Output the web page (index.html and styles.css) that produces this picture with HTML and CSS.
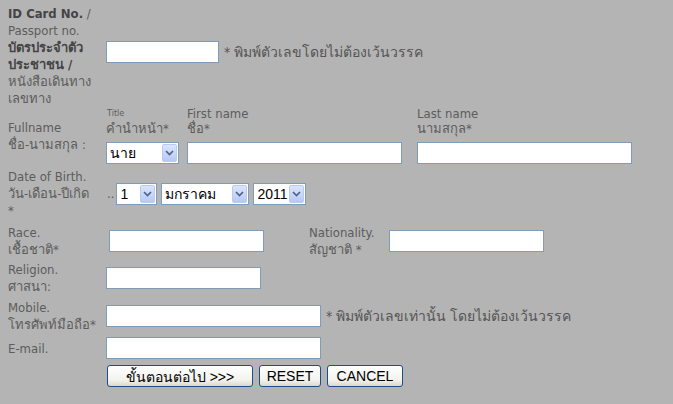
FILE: index.html
```html
<!DOCTYPE html>
<html lang="th">
<head>
    <meta charset="UTF-8">
    <title>Register</title>
    <link rel="stylesheet" href="styles.css">
</head>
<body>
    <form class="form">
        <div class="row row-id">
            <div class="label">
                <span class="ln"><b>ID Card No.</b> /</span>
                <span class="ln">Passport no.</span>
                <span class="ln"><b>บัตรประจำตัว</b></span>
                <span class="ln"><b>ประชาชน /</b></span>
                <span class="ln">หนังสือเดินทาง</span>
                <span class="ln">เลขทาง</span>
            </div>
            <div class="field id-field">
                <input type="text" class="text w-id">
                <span class="hint">* พิมพ์ตัวเลขโดยไม่ต้องเว้นวรรค</span>
            </div>
        </div>

        <div class="row row-name">
            <div class="label">
                <span class="ln">Fullname</span>
                <span class="ln">ชื่อ-นามสกุล :</span>
            </div>
            <div class="name-grid">
                <div class="head"><span class="top tiny">Title</span><span class="ln">คำนำหน้า*</span></div>
                <div class="head"><span class="top">First name</span><span class="ln">ชื่อ*</span></div>
                <div class="head"><span class="top">Last name</span><span class="ln">นามสกุล*</span></div>
                <div class="select w-title">
                    <select><option>นาย</option><option>นาง</option><option>นางสาว</option></select>
                    <span class="arrow"><svg width="9" height="6" viewBox="0 0 9 6"><path d="M1 1 L4.5 4.5 L8 1" fill="none" stroke="#4d6185" stroke-width="1.6"/></svg></span>
                </div>
                <input type="text" class="text w-name">
                <input type="text" class="text w-name">
            </div>
        </div>

        <div class="row row-dob">
            <div class="label">
                <span class="ln">Date of Birth.</span>
                <span class="ln">วัน-เดือน-ปีเกิด</span>
                <span class="ln">*</span>
            </div>
            <div class="field">
                <span class="dots">..</span>
                <div class="select w-day">
                    <select><option>1</option><option>2</option></select>
                    <span class="arrow"><svg width="9" height="6" viewBox="0 0 9 6"><path d="M1 1 L4.5 4.5 L8 1" fill="none" stroke="#4d6185" stroke-width="1.6"/></svg></span>
                </div>
                <div class="select w-month">
                    <select><option>มกราคม</option><option>กุมภาพันธ์</option></select>
                    <span class="arrow"><svg width="9" height="6" viewBox="0 0 9 6"><path d="M1 1 L4.5 4.5 L8 1" fill="none" stroke="#4d6185" stroke-width="1.6"/></svg></span>
                </div>
                <div class="select w-year">
                    <select><option>2011</option><option>2010</option></select>
                    <span class="arrow"><svg width="9" height="6" viewBox="0 0 9 6"><path d="M1 1 L4.5 4.5 L8 1" fill="none" stroke="#4d6185" stroke-width="1.6"/></svg></span>
                </div>
            </div>
        </div>

        <div class="row row-race">
            <div class="label">
                <span class="ln">Race.</span>
                <span class="ln">เชื้อชาติ*</span>
            </div>
            <input type="text" class="text w-short race-input">
            <div class="label nat-label">
                <span class="ln">Nationality.</span>
                <span class="ln">สัญชาติ *</span>
            </div>
            <input type="text" class="text w-short">
        </div>

        <div class="row row-religion">
            <div class="label">
                <span class="ln">Religion.</span>
                <span class="ln">ศาสนา:</span>
            </div>
            <input type="text" class="text w-short">
        </div>

        <div class="row row-mobile">
            <div class="label">
                <span class="ln">Mobile.</span>
                <span class="ln">โทรศัพท์มือถือ*</span>
            </div>
            <input type="text" class="text w-long">
            <span class="hint">* พิมพ์ตัวเลขเท่านั้น โดยไม่ต้องเว้นวรรค</span>
        </div>

        <div class="row row-email">
            <div class="label">
                <span class="ln">E-mail.</span>
            </div>
            <input type="text" class="text w-long">
        </div>

        <div class="buttons">
            <button type="submit" class="btn btn-next">ขั้นตอนต่อไป &gt;&gt;&gt;</button>
            <button type="reset" class="btn btn-reset">RESET</button>
            <button type="button" class="btn btn-cancel">CANCEL</button>
        </div>
    </form>
</body>
</html>
```

FILE: styles.css
```css
body {
    margin: 0;
    background-color: #b4b4b4;
    font-family: "DejaVu Sans Condensed", "DejaVu Sans", "Noto Sans", sans-serif;
    font-size: 13px;
    color: #5c5c5c;
    height: 100vh;
}

.form {
    padding: 5px 0 0 8px;
}

.row {
    display: flex;
    align-items: center;
}

.label {
    width: 98px;
    flex-shrink: 0;
}

/* one text line, fixed height so thai fallback can't stretch it */
.ln {
    display: block;
    height: 17px;
    line-height: 17px;
    white-space: nowrap;
}

.label b {
    color: #444;
}

.field {
    display: flex;
    align-items: center;
}

/* text boxes */
.text {
    box-sizing: border-box;
    height: 22px;
    margin: 0;
    padding: 0 3px;
    border: 1px solid #7f9db9;
    background-color: #fff;
    font: inherit;
}

.w-id { width: 113px; }
.w-name { width: 215px; }
.w-short { width: 155px; }
.w-long { width: 215px; }

.hint {
    margin-left: 5px;
    font-size: 14px;
    color: #555;
    white-space: nowrap;
}

/* fake xp style selects */
.select {
    position: relative;
    box-sizing: border-box;
    height: 22px;
    border: 1px solid #7f9db9;
    background-color: #fff;
}

.select select {
    appearance: none;
    -webkit-appearance: none;
    width: 100%;
    height: 100%;
    border: none;
    background: transparent;
    padding: 0 0 0 3px;
    margin: 0;
    font-family: "Liberation Sans", "DejaVu Sans", sans-serif;
    font-size: 14px;
    color: #000;
    outline: none;
}

.select .arrow {
    position: absolute;
    top: 1px;
    right: 1px;
    width: 15px;
    height: 18px;
    box-sizing: border-box;
    border: 1px solid #b9cbf3;
    border-radius: 2px;
    background: linear-gradient(#dbe5fc, #b7c9f4);
    display: flex;
    align-items: center;
    justify-content: center;
    pointer-events: none;
}

.w-title { width: 73px; }
.w-day { width: 41px; }
.w-month { width: 88px; }
.w-year { width: 53px; }

/* row 1 */
.row-id {
    align-items: flex-start;
}

.id-field {
    margin-top: 36px;
}

/* fullname */
.name-grid {
    display: grid;
    grid-template-columns: 81px 230px 215px;
    row-gap: 5px;
}

.head .top {
    display: block;
    height: 13px;
    line-height: 13px;
    white-space: nowrap;
}

.head .tiny {
    font-size: 9px;
    padding-left: 1px;
}

/* date of birth */
.row-dob {
    margin-top: 4px;
}

.dots {
    margin: 0 2px 0 1px;
    line-height: 1;
}

.row-dob .select {
    margin-right: 4px;
}

/* race / nationality */
.row-race {
    margin-top: 5px;
}

.race-input {
    margin-left: 3px;
}

.nat-label {
    width: 80px;
    margin-left: 45px;
}

.row-religion {
    margin-top: 3px;
}

.row-mobile {
    margin-top: 4px;
}

.row-email {
    margin-top: 4px;
}

/* buttons */
.buttons {
    display: flex;
    gap: 6px;
    margin: 6px 0 0 99px;
}

.btn {
    box-sizing: border-box;
    height: 22px;
    padding: 0;
    border: 1px solid #1c4f8a;
    border-radius: 3px;
    background: linear-gradient(#ffffff, #f2f2ee 70%, #dcd8cc);
    font-family: "Liberation Sans", sans-serif;
    font-size: 14px;
    color: #000;
    cursor: pointer;
}

.btn-next { width: 146px; }
.btn-reset { width: 62px; }
.btn-cancel { width: 76px; }
```
